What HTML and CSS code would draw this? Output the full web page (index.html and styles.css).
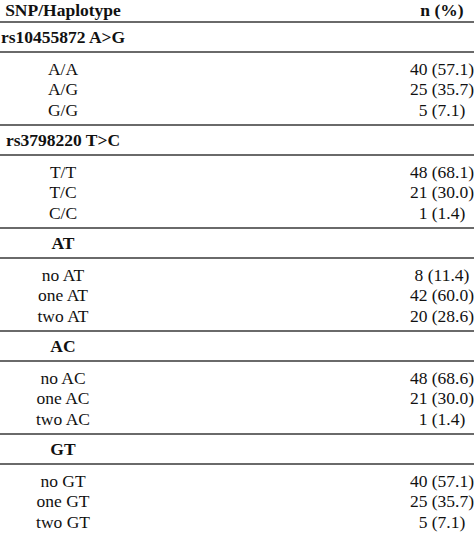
FILE: index.html
```html
<!DOCTYPE html>
<html>
<head>
<meta charset="utf-8">
<link rel="stylesheet" href="styles.css">
</head>
<body>
<div class="tbl">
  <div class="row head"><div class="c1">SNP/Haplotype</div><div class="c2">n (%)</div></div>

  <div class="row sec"><div class="c1">rs10455872 A&gt;G</div></div>
  <div class="row data">
    <div class="c1"><div>A/A</div><div>A/G</div><div>G/G</div></div>
    <div class="c2"><div>40 (57.1)</div><div>25 (35.7)</div><div>5 (7.1)</div></div>
  </div>

  <div class="row sec"><div class="c1">rs3798220 T&gt;C</div></div>
  <div class="row data">
    <div class="c1"><div>T/T</div><div>T/C</div><div>C/C</div></div>
    <div class="c2"><div>48 (68.1)</div><div>21 (30.0)</div><div>1 (1.4)</div></div>
  </div>

  <div class="row sec"><div class="c1">AT</div></div>
  <div class="row data">
    <div class="c1"><div>no AT</div><div>one AT</div><div>two AT</div></div>
    <div class="c2"><div>8 (11.4)</div><div>42 (60.0)</div><div>20 (28.6)</div></div>
  </div>

  <div class="row sec"><div class="c1">AC</div></div>
  <div class="row data">
    <div class="c1"><div>no AC</div><div>one AC</div><div>two AC</div></div>
    <div class="c2"><div>48 (68.6)</div><div>21 (30.0)</div><div>1 (1.4)</div></div>
  </div>

  <div class="row sec"><div class="c1">GT</div></div>
  <div class="row data">
    <div class="c1"><div>no GT</div><div>one GT</div><div>two GT</div></div>
    <div class="c2"><div>40 (57.1)</div><div>25 (35.7)</div><div>5 (7.1)</div></div>
  </div>
</div>
</body>
</html>
```

FILE: styles.css
```css
html, body {
  margin: 0;
  padding: 0;
  background: #ffffff;
  overflow: hidden;
}
.tbl {
  width: 484px;
  font-family: "Liberation Serif", "Times New Roman", serif;
  font-size: 17.5px;
  color: #111111;
}
.row {
  display: flex;
  justify-content: space-between;
  border-bottom: 2px solid #6a6a6a;
}
.c1 {
  width: 126px;
  text-align: center;
  white-space: nowrap;
}
.c2 {
  width: 84px;
  text-align: center;
  white-space: nowrap;
}
.head {
  height: 21px;
  align-items: flex-start;
  line-height: 20px;
  font-weight: bold;
}
.sec {
  height: 28px;
  align-items: center;
  font-weight: bold;
}
.data {
  padding: 5.5px 0 4px;
  line-height: 20.5px;
  height: 61.5px;
}
```
